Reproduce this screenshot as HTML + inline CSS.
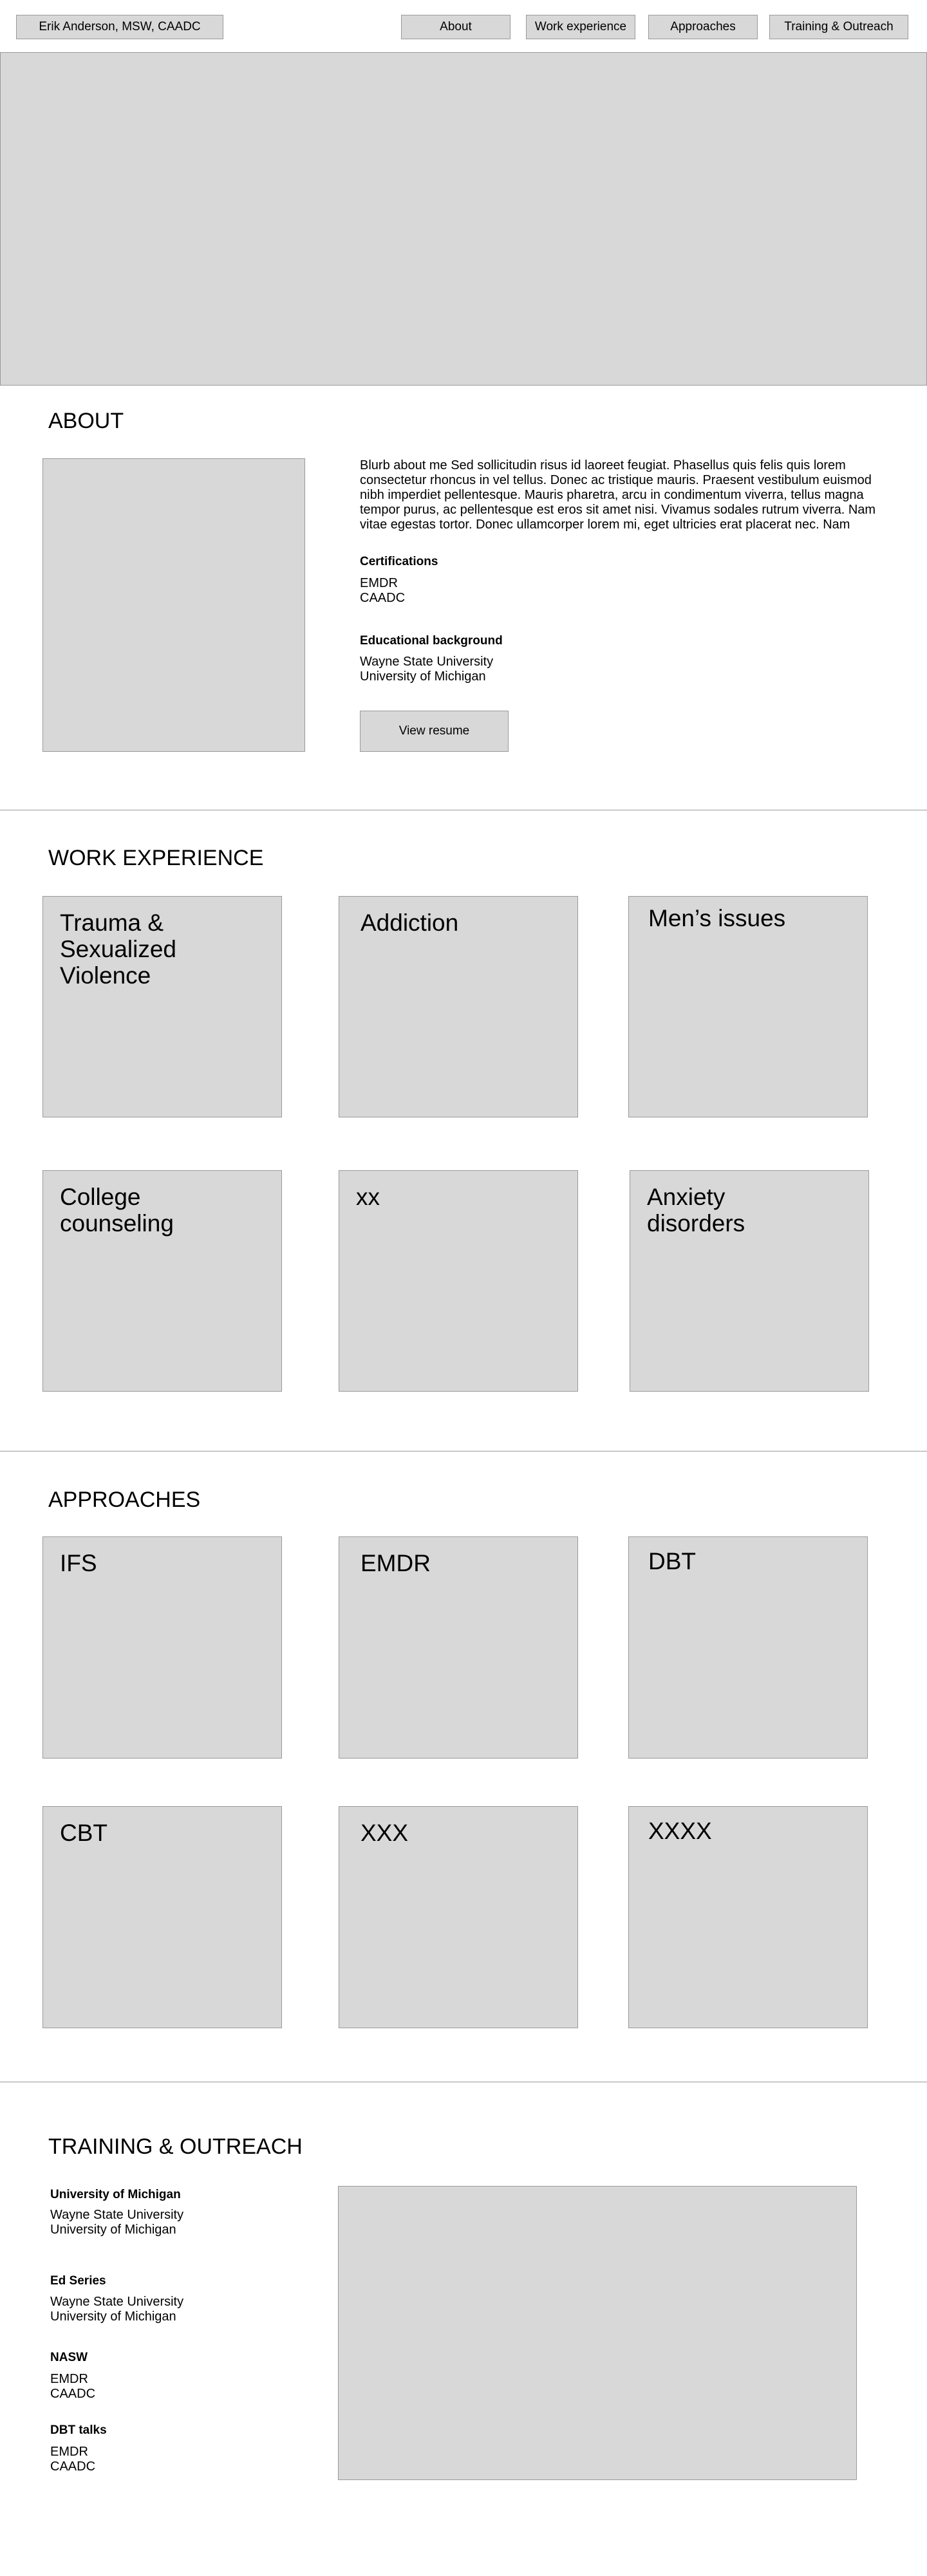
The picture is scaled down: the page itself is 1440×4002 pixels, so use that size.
<!DOCTYPE html>
<html><head><meta charset="utf-8">
<style>
*{margin:0;padding:0;box-sizing:border-box}
body{width:1440px;height:4002px;position:relative;background:#fff;font-family:"Liberation Sans",Arial,sans-serif;color:#000;overflow:hidden}
.b{position:absolute;background:#d8d8d8;border:1px solid #999}
.nav{display:flex;align-items:center;justify-content:center;font-size:19px;white-space:nowrap}
.t{position:absolute;white-space:nowrap}
.h{font-size:34px;line-height:40px}
.hr{position:absolute;left:0;width:1440px;height:1px;background:#999}
.card{padding:20px 26px;font-size:37px;line-height:41px}
.p{font-size:20px;line-height:23px}
.bold{font-weight:bold;font-size:19px;line-height:22px}
</style></head><body>
<div class="b nav" style="left:25px;top:23px;width:322px;height:38px">Erik Anderson, MSW, CAADC</div>
<div class="b nav" style="left:623px;top:23px;width:170px;height:38px">About</div>
<div class="b nav" style="left:817px;top:23px;width:170px;height:38px">Work experience</div>
<div class="b nav" style="left:1007px;top:23px;width:170px;height:38px">Approaches</div>
<div class="b nav" style="left:1195px;top:23px;width:216px;height:38px">Training &amp; Outreach</div>
<div class="b" style="left:0;top:81px;width:1440px;height:518px"></div>

<div class="t h" style="left:75px;top:634px">ABOUT</div>
<div class="b" style="left:66px;top:712px;width:408px;height:456px"></div>
<div class="t p" style="left:559px;top:712px">Blurb about me Sed sollicitudin risus id laoreet feugiat. Phasellus quis felis quis lorem<br>consectetur rhoncus in vel tellus. Donec ac tristique mauris. Praesent vestibulum euismod<br>nibh imperdiet pellentesque. Mauris pharetra, arcu in condimentum viverra, tellus magna<br>tempor purus, ac pellentesque est eros sit amet nisi. Vivamus sodales rutrum viverra. Nam<br>vitae egestas tortor. Donec ullamcorper lorem mi, eget ultricies erat placerat nec. Nam</div>
<div class="t bold" style="left:559px;top:862px">Certifications</div>
<div class="t p" style="left:559px;top:895px">EMDR<br>CAADC</div>
<div class="t bold" style="left:559px;top:985px">Educational background</div>
<div class="t p" style="left:559px;top:1017px">Wayne State University<br>University of Michigan</div>
<div class="b nav" style="left:559px;top:1104px;width:231px;height:64px">View resume</div>
<div class="hr" style="top:1258px"></div>

<div class="t h" style="left:75px;top:1313px">WORK EXPERIENCE</div>
<div class="b card" style="left:66px;top:1392px;width:372px;height:344px">Trauma &amp;<br>Sexualized<br>Violence</div>
<div class="b card" style="left:526px;top:1392px;width:372px;height:344px;padding-left:33px">Addiction</div>
<div class="b card" style="left:976px;top:1392px;width:372px;height:344px;padding-top:13px;padding-left:30px">Men’s issues</div>
<div class="b card" style="left:66px;top:1818px;width:372px;height:344px">College<br>counseling</div>
<div class="b card" style="left:526px;top:1818px;width:372px;height:344px;padding-left:26px">xx</div>
<div class="b card" style="left:978px;top:1818px;width:372px;height:344px;padding-left:26px">Anxiety<br>disorders</div>
<div class="hr" style="top:2254px"></div>

<div class="t h" style="left:75px;top:2310px">APPROACHES</div>
<div class="b card" style="left:66px;top:2387px;width:372px;height:345px">IFS</div>
<div class="b card" style="left:526px;top:2387px;width:372px;height:345px;padding-left:33px">EMDR</div>
<div class="b card" style="left:976px;top:2387px;width:372px;height:345px;padding-top:17px;padding-left:30px">DBT</div>
<div class="b card" style="left:66px;top:2806px;width:372px;height:345px">CBT</div>
<div class="b card" style="left:526px;top:2806px;width:372px;height:345px;padding-left:33px">XXX</div>
<div class="b card" style="left:976px;top:2806px;width:372px;height:345px;padding-top:17px;padding-left:30px">XXXX</div>
<div class="hr" style="top:3234px"></div>

<div class="t h" style="left:75px;top:3315px">TRAINING &amp; OUTREACH</div>
<div class="t bold" style="left:78px;top:3399px">University of Michigan</div>
<div class="t p" style="left:78px;top:3430px">Wayne State University<br>University of Michigan</div>
<div class="t bold" style="left:78px;top:3533px">Ed Series</div>
<div class="t p" style="left:78px;top:3565px">Wayne State University<br>University of Michigan</div>
<div class="t bold" style="left:78px;top:3652px">NASW</div>
<div class="t p" style="left:78px;top:3685px">EMDR<br>CAADC</div>
<div class="t bold" style="left:78px;top:3765px">DBT talks</div>
<div class="t p" style="left:78px;top:3798px">EMDR<br>CAADC</div>
<div class="b" style="left:525px;top:3396px;width:806px;height:457px"></div>
</body></html>
